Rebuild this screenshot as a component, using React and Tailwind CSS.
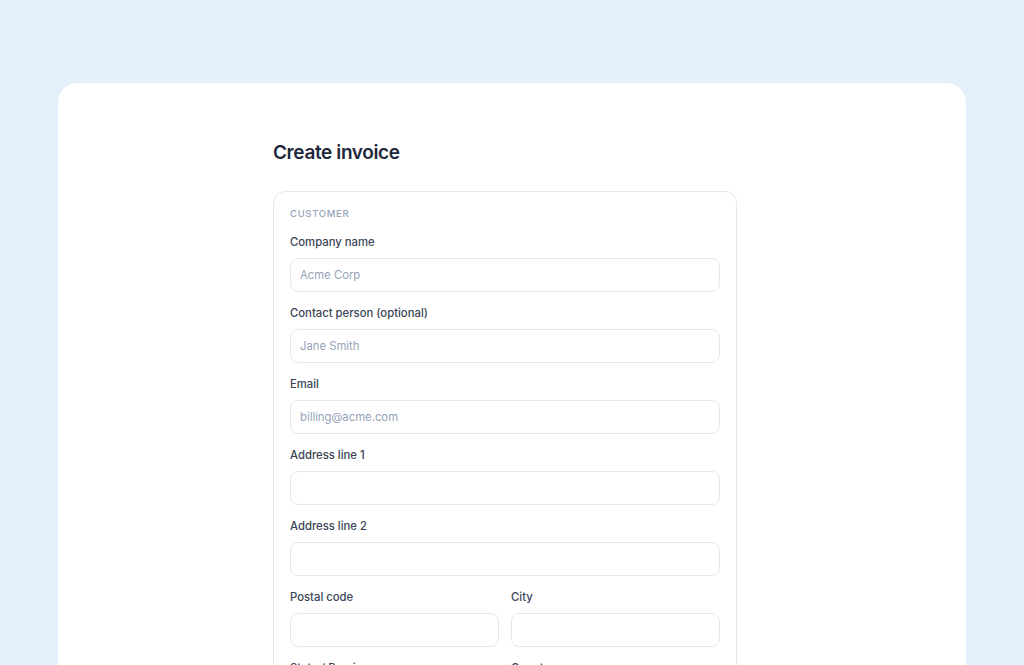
import React from 'react';

const font = { fontFamily: 'Inter, "Noto Sans", sans-serif' };

// Single labelled text field
function Field({ label, placeholder }) {
  return (
    <div className="flex flex-col">
      <label className="text-[11.3px] leading-4 font-medium text-[#3b4556] mb-2">{label}</label>
      <input
        className="h-[34px] w-full rounded-lg border border-[#e5e9ef] px-[9px] text-[11.3px] text-[#1e293b] placeholder:text-[#94a3b8] outline-none"
        placeholder={placeholder}
      />
    </div>
  );
}

export default function App() {
  return (
    <div className="min-h-screen bg-[#e6f0fd] pt-[83px] px-[58px]" style={font}>
      <div className="bg-white rounded-[20px] pt-[56px] pb-10 pl-[215px]">
        <div className="w-[464px]">
          <h1 className="text-[19px] leading-7 font-semibold text-[#1e293b] tracking-[-0.02em] mb-[24px]">Create invoice</h1>
          <div className="rounded-xl border border-[#e5e9ef] p-4">
            <div className="text-[9.5px] leading-3 font-medium uppercase tracking-[0.07em] text-[#94a3b8] mb-[14px]">Customer</div>
            <div className="flex flex-col gap-[13px]">
              <Field label="Company name" placeholder="Acme Corp" />
              <Field label="Contact person (optional)" placeholder="Jane Smith" />
              <Field label="Email" placeholder="billing@acme.com" />
              <Field label="Address line 1" />
              <Field label="Address line 2" />
              <div className="grid grid-cols-2 gap-3">
                <Field label="Postal code" />
                <Field label="City" />
              </div>
              <div className="grid grid-cols-2 gap-3">
                <Field label="State / Province" />
                <Field label="Country" />
              </div>
            </div>
          </div>
        </div>
      </div>
    </div>
  );
}
